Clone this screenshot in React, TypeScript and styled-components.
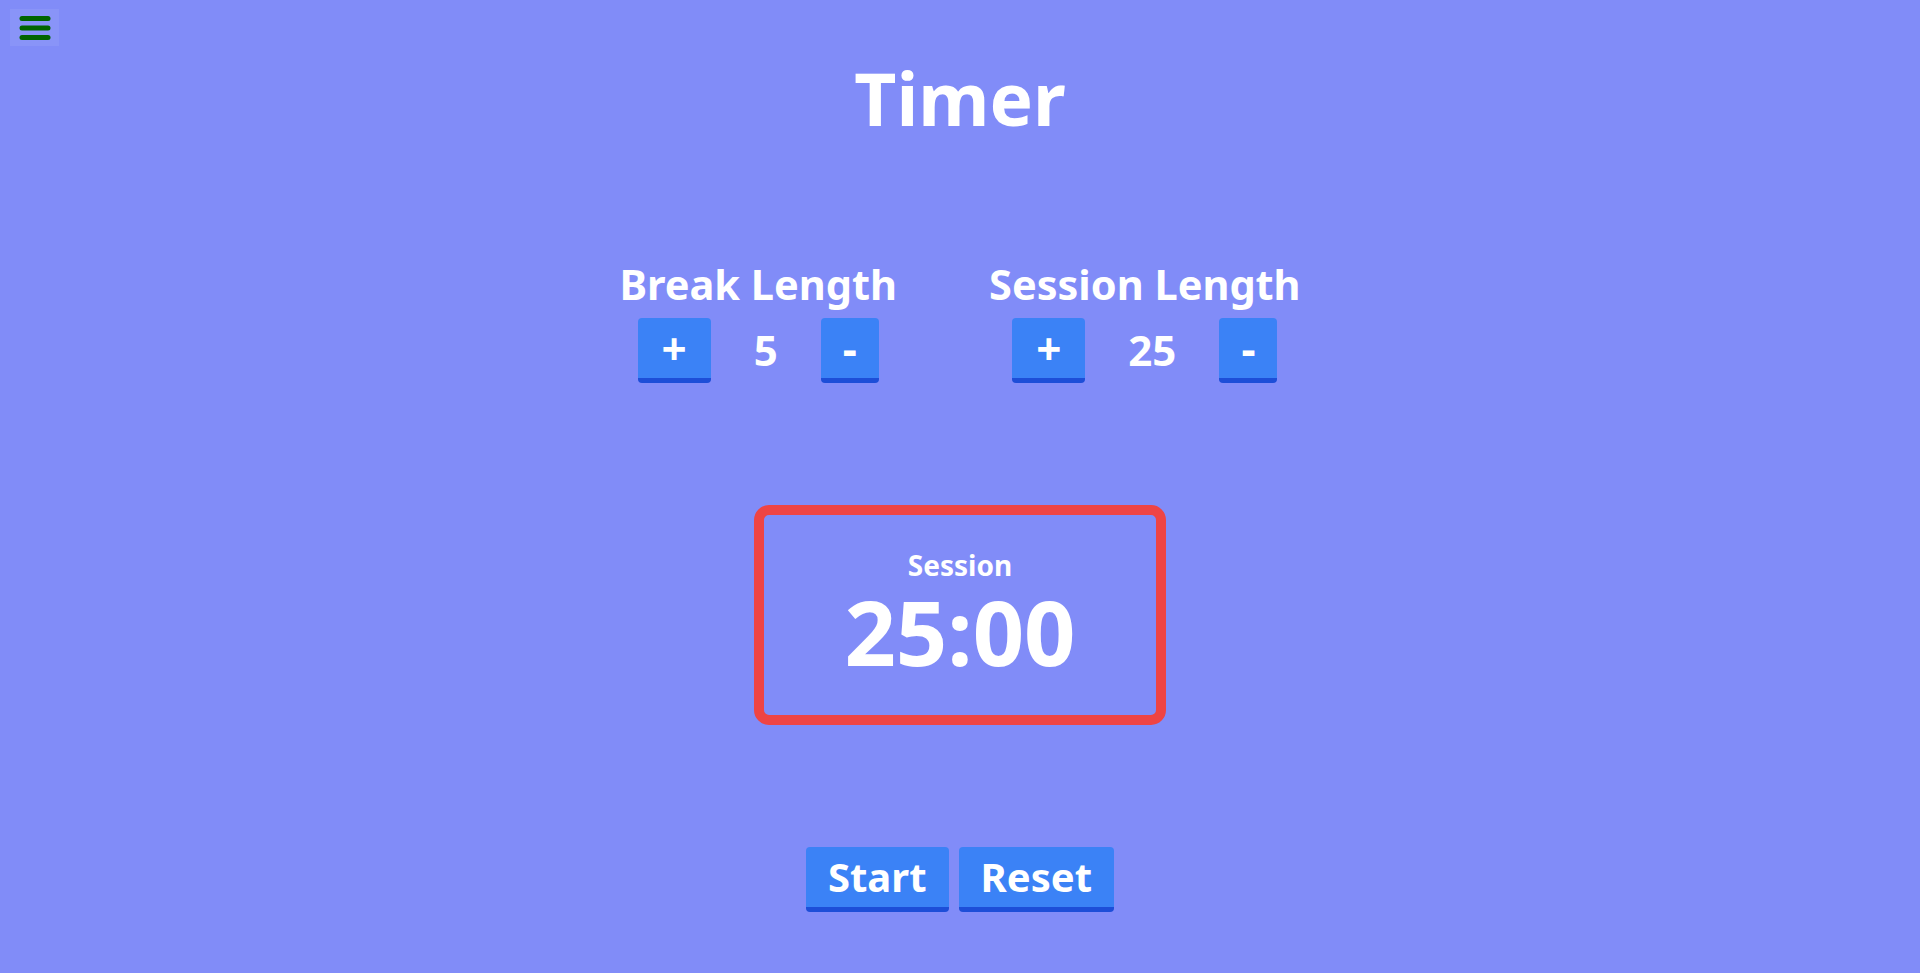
import React, { useState } from "react";
import styled, { createGlobalStyle } from "styled-components";

const GlobalStyle = createGlobalStyle`
  html, body {
    margin: 0;
    padding: 0;
    background: #818cf8;
  }
  body {
    font-family: "Noto Sans", "Open Sans", sans-serif;
    color: #ffffff;
  }
  * { box-sizing: border-box; }
`;

const Page = styled.main`
  position: relative;
  height: 100vh;
  display: flex;
  flex-direction: column;
  align-items: center;
  justify-content: space-around;
  background: #818cf8;
`;

const MenuButton = styled.button`
  position: absolute;
  top: 9px;
  left: 10px;
  width: 49px;
  height: 37px;
  border: none;
  padding: 0;
  background: rgba(255, 255, 255, 0.07);
  display: flex;
  align-items: center;
  justify-content: center;
  cursor: pointer;
`;

const Title = styled.h1`
  margin: 0;
  font-size: 73px;
  line-height: 1;
  font-weight: 700;
`;

const Settings = styled.section`
  display: flex;
  gap: 92px;
  align-items: flex-start;
  margin-top: 8px;
`;

const LengthGroup = styled.div`
  display: flex;
  flex-direction: column;
  align-items: center;
  gap: 12px;
`;

const Heading = styled.h2`
  margin: 0;
  font-size: 41.5px;
  line-height: 1;
  font-weight: 700;
  white-space: nowrap;
`;

const Row = styled.div`
  display: flex;
  align-items: center;
`;

const Button = styled.button<{ $size?: number; $pad?: number }>`
  height: 65px;
  padding: 0 ${(p) => p.$pad ?? 24}px;
  border: none;
  border-bottom: 5px solid #1d4ed8;
  border-radius: 4px;
  background: #3b82f6;
  color: #ffffff;
  font-family: inherit;
  font-weight: 700;
  font-size: ${(p) => p.$size ?? 40}px;
  line-height: 1;
  display: flex;
  align-items: center;
  justify-content: center;
  cursor: pointer;
`;

const Value = styled.span`
  margin: 0 43px;
  font-size: 42px;
  line-height: 1;
  font-weight: 700;
`;

const TimerBox = styled.section`
  width: 412px;
  height: 220px;
  border: 10px solid #ef4444;
  border-radius: 15px;
  display: flex;
  flex-direction: column;
  align-items: center;
  justify-content: center;
`;

const TimerLabel = styled.div`
  font-size: 28px;
  line-height: 1.2;
  font-weight: 700;
`;

const TimeLeft = styled.div`
  font-size: 90px;
  line-height: 1.1;
  font-weight: 700;
`;

const Controls = styled.div`
  display: flex;
  gap: 10px;
`;

const Hamburger = () => (
  <svg width="32" height="26" viewBox="0 0 32 26">
    <g stroke="#006400" strokeWidth="5" strokeLinecap="round">
      <line x1="3" y1="3.5" x2="29" y2="3.5" />
      <line x1="3" y1="13" x2="29" y2="13" />
      <line x1="3" y1="22.5" x2="29" y2="22.5" />
    </g>
  </svg>
);

export default function App() {
  const [brk, setBrk] = useState(5);
  const [session, setSession] = useState(25);

  return (
    <>
      <GlobalStyle />
      <Page>
        <MenuButton aria-label="menu">
          <Hamburger />
        </MenuButton>
        <Title>Timer</Title>
        <Settings>
          <LengthGroup>
            <Heading>Break Length</Heading>
            <Row>
              <Button $size={44} $pad={24} onClick={() => setBrk(Math.min(60, brk + 1))}>+</Button>
              <Value>{brk}</Value>
              <Button $size={44} $pad={22} onClick={() => setBrk(Math.max(1, brk - 1))}>-</Button>
            </Row>
          </LengthGroup>
          <LengthGroup>
            <Heading>Session Length</Heading>
            <Row>
              <Button $size={44} $pad={24} onClick={() => setSession(Math.min(60, session + 1))}>+</Button>
              <Value>{session}</Value>
              <Button $size={44} $pad={22} onClick={() => setSession(Math.max(1, session - 1))}>-</Button>
            </Row>
          </LengthGroup>
        </Settings>
        <TimerBox>
          <TimerLabel>Session</TimerLabel>
          <TimeLeft>{`${String(session).padStart(2, "0")}:00`}</TimeLeft>
        </TimerBox>
        <Controls>
          <Button $size={40} $pad={22}>Start</Button>
          <Button $size={40} $pad={22}>Reset</Button>
        </Controls>
      </Page>
    </>
  );
}
